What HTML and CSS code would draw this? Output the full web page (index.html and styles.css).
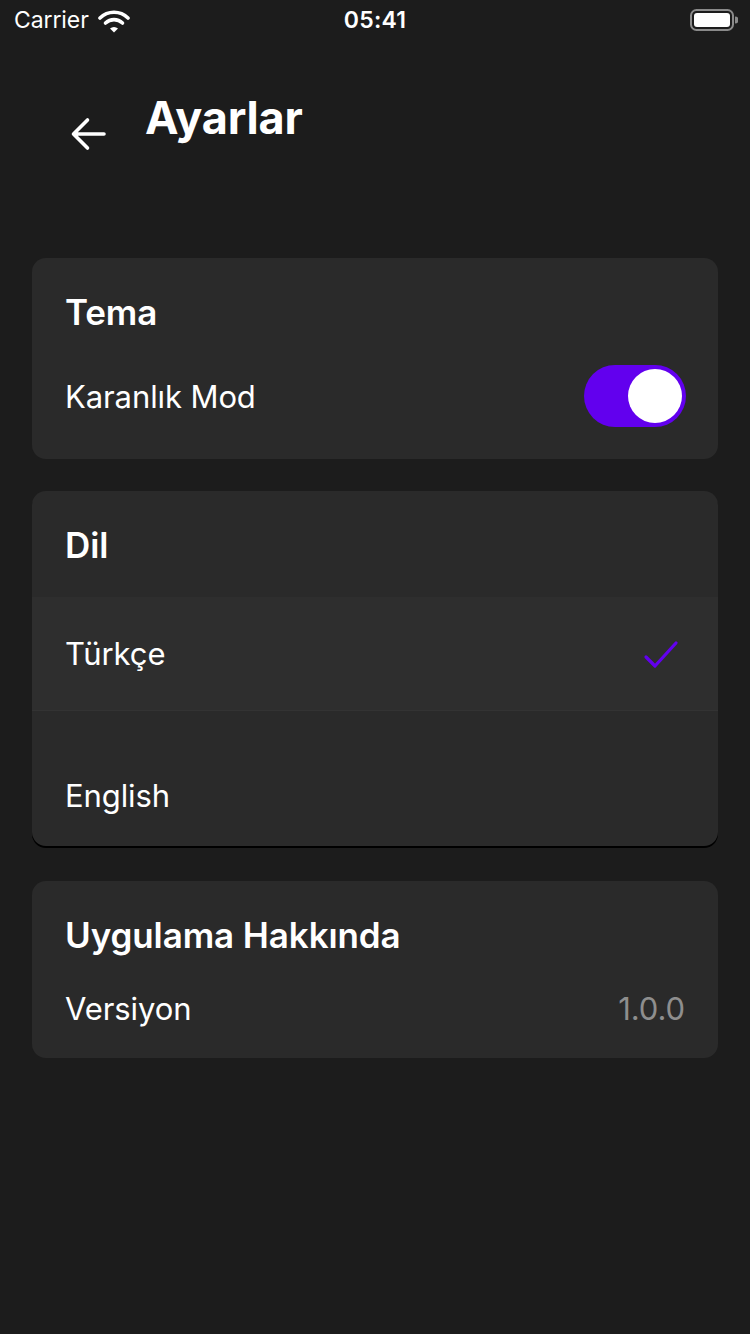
FILE: index.html
```html
<!DOCTYPE html>
<html lang="tr">
<head>
<meta charset="utf-8">
<title>Ayarlar</title>
<link rel="stylesheet" href="styles.css">
</head>
<body>
<div class="screen">
  <div class="status-bar">
    <div class="status-left">
      <span class="carrier">Carrier</span>
      <svg class="wifi" width="32" height="24" viewBox="0 0 32 24">
        <path d="M2 9 A20 20 0 0 1 30 9" fill="none" stroke="#fff" stroke-width="3.6" stroke-linecap="round"/>
        <path d="M7.5 14 A12.5 12.5 0 0 1 24.5 14" fill="none" stroke="#fff" stroke-width="3.6" stroke-linecap="round"/>
        <path d="M12 19.5 L16 23.5 L20 19.5 A6 6 0 0 0 12 19.5 Z" fill="#fff"/>
      </svg>
    </div>
    <span class="time">05:41</span>
    <div class="status-right">
      <svg width="50" height="24" viewBox="0 0 50 24">
        <rect x="3" y="2" width="42" height="20" rx="5.5" fill="none" stroke="#8a8a8a" stroke-width="2"/>
        <rect x="6" y="5" width="36" height="14" rx="3" fill="#fff"/>
        <path d="M47 8.5 a2.5 2.5 0 0 1 0 7 z" fill="#8a8a8a"/>
      </svg>
    </div>
  </div>

  <header class="nav">
    <svg class="back" width="40" height="40" viewBox="0 0 40 40">
      <path d="M36 20 H6 M19.5 6 L5.5 20 L19.5 34" fill="none" stroke="#fff" stroke-width="3.6" stroke-linecap="round" stroke-linejoin="round"/>
    </svg>
    <h1 class="title">Ayarlar</h1>
  </header>

  <main class="content">
    <section class="card card-theme">
      <h2 class="card-title">Tema</h2>
      <div class="row row-toggle">
        <span class="label">Karanlık Mod</span>
        <div class="switch"><div class="knob"></div></div>
      </div>
    </section>

    <section class="card card-lang">
      <h2 class="card-title lang-title">Dil</h2>
      <div class="option option-selected">
        <span class="label">Türkçe</span>
        <svg class="check" width="40" height="34" viewBox="0 0 40 34">
          <path d="M4 19 L13 28 L34 5" fill="none" stroke="#6200ee" stroke-width="3.2" stroke-linecap="round" stroke-linejoin="round"/>
        </svg>
      </div>
      <div class="option option-last">
        <span class="label">English</span>
      </div>
    </section>

    <section class="card card-about">
      <h2 class="card-title">Uygulama Hakkında</h2>
      <div class="row row-version">
        <span class="label">Versiyon</span>
        <span class="value">1.0.0</span>
      </div>
    </section>
  </main>
</div>
</body>
</html>
```

FILE: styles.css
```css
* { box-sizing: border-box; }

html, body {
  margin: 0;
  padding: 0;
  background: #1c1c1c;
}

body {
  font-family: Inter, "Noto Sans", "Liberation Sans", sans-serif;
  color: #ffffff;
  width: 750px;
  height: 1334px;
  overflow: hidden;
}

.screen {
  display: flex;
  flex-direction: column;
}

.status-bar {
  height: 40px;
  padding: 0 12px 0 14px;
  display: flex;
  align-items: center;
  justify-content: space-between;
  position: relative;
}

.status-left {
  display: flex;
  align-items: center;
  gap: 9px;
}

.carrier {
  font-size: 23px;
  font-weight: 400;
  letter-spacing: -0.1px;
}

.wifi { margin-top: 2px; }

.time {
  position: absolute;
  left: 0;
  right: 0;
  text-align: center;
  font-size: 23px;
  font-weight: 600;
  letter-spacing: 0.2px;
  pointer-events: none;
}

.status-right {
  display: flex;
  align-items: center;
}

.nav {
  height: 158px;
  display: flex;
  align-items: flex-start;
  padding: 38px 0 0 68px;
}

.back {
  margin-top: 36px;
  flex-shrink: 0;
}

.title {
  margin: 0 0 0 37px;
  font-size: 45px;
  font-weight: 700;
  line-height: 80px;
  letter-spacing: -0.2px;
}

.content {
  padding: 60px 32px 0 32px;
  display: flex;
  flex-direction: column;
  gap: 32px;
}

.card {
  background: #2a2a2a;
  border-radius: 14px;
}

.card-title {
  margin: 0;
  font-size: 35px;
  font-weight: 600;
  line-height: 60px;
  padding: 0 33px;
  letter-spacing: -0.1px;
}

.label {
  font-size: 31px;
  font-weight: 400;
  letter-spacing: -0.1px;
}

.row {
  display: flex;
  align-items: center;
  justify-content: space-between;
  padding: 0 33px 0 33px;
}

.card-theme { padding: 24px 0 32px; }
.row-toggle { margin-top: 23px; height: 62px; padding-right: 32px; }

.switch {
  width: 102px;
  height: 62px;
  border-radius: 31px;
  background: #6200ee;
  display: flex;
  align-items: center;
  justify-content: flex-end;
  padding-right: 4px;
}

.knob {
  width: 54px;
  height: 54px;
  border-radius: 50%;
  background: #ffffff;
}

.card-lang {
  overflow: hidden;
  box-shadow: 0 2px 0 #000;
}

.lang-title {
  height: 106px;
  line-height: 108px;
}

.option {
  display: flex;
  align-items: center;
  justify-content: space-between;
  padding: 0 36px 0 33px;
}

.option-selected {
  height: 114px;
  background: #2e2e2e;
  border-bottom: 1px solid #333333;
}

.check { margin-top: 2px; }

.option-last {
  height: 135px;
  align-items: flex-end;
  padding-bottom: 30px;
  line-height: 40px;
}

.card-about { padding: 24px 0 30px; margin-top: 3px; }
.row-version { margin-top: 23px; height: 40px; }

.value {
  font-size: 31px;
  color: #8e8e8e;
  letter-spacing: -0.1px;
}
```
